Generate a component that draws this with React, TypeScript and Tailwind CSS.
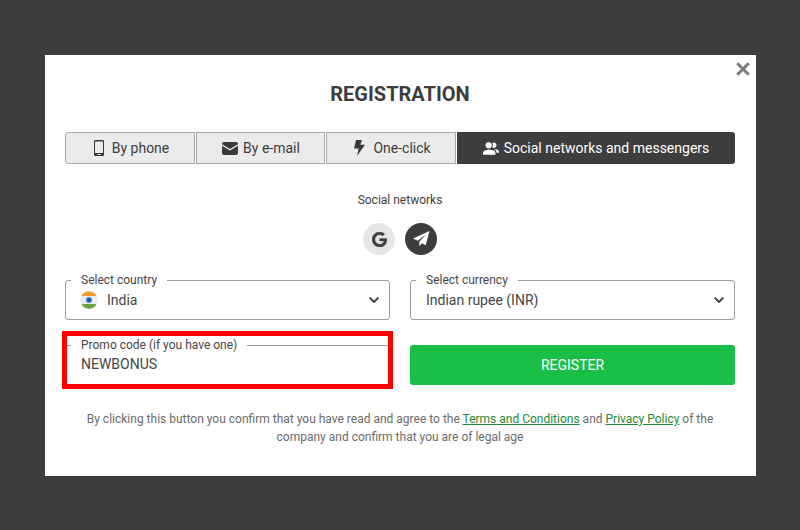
import type { ReactNode } from "react";

function PhoneIcon() {
  return (
    <svg width="10" height="16" viewBox="0 0 10 16" className="shrink-0">
      <path fillRule="evenodd" fill="#3a3a3a" d="M1.200 0h7.600Q10 0 10 1.200v13.600Q10 16 8.800 16H1.200Q0 16 0 14.800V1.200Q0 0 1.200 0zM1 1.500v11.500h8V1.500zM3.500 14v1h3v-1z" />
    </svg>
  );
}

function MailIcon() {
  return (
    <svg width="16" height="13" viewBox="0 0 16 13" className="shrink-0" fill="#3a3a3a">
      <path d="M2 0h12Q16 0 16 2v.3L8 7 0 2.300V2Q0 0 2 0z" />
      <path d="M0 3.700l8 4.700 8-4.700V11q0 2-2 2H2Q0 13 0 11z" />
    </svg>
  );
}

function BoltIcon() {
  return (
    <svg width="11" height="16" viewBox="0 0 11 16" className="shrink-0">
      <path fill="#3a3a3a" d="M2 0h6L6.300 4.700H11L3 16l1.600-7.400H0z" />
    </svg>
  );
}

function PeopleIcon() {
  return (
    <svg width="16" height="13" viewBox="0 0 16 13" className="shrink-0" fill="#fff">
      <circle cx="5.700" cy="3.300" r="3.100" />
      <path d="M0 12.800v-1.800C0 8.900 2.900 7.800 6.200 7.800s6.300 1.100 6.300 3.200v1.800z" />
      <path d="M9.300.900a2.700 2.700 0 1 1 0 4.600c.6-1.300.6-3.300 0-4.600z" />
      <path d="M11 7c2.800 0 5 .9 5 2.500v1.200h-2.400C13.300 9 12.500 7.900 11 7z" />
    </svg>
  );
}

function GoogleIcon() {
  return (
    <svg width="15" height="15" viewBox="0 0 24 24">
      <path fill="#3d3d3d" stroke="#3d3d3d" strokeWidth=".5" d="M12.240 10.285V14.400h6.806c-.275 1.765-2.056 5.174-6.806 5.174-4.095 0-7.439-3.389-7.439-7.574s3.345-7.574 7.439-7.574c2.330 0 3.891.989 4.785 1.849l3.254-3.138C18.189 1.186 15.479 0 12.240 0c-6.635 0-12 5.365-12 12s5.365 12 12 12c6.926 0 11.520-4.869 11.520-11.726 0-.788-.085-1.390-.189-1.989H12.240z" />
    </svg>
  );
}

function PlaneIcon() {
  return (
    <svg width="17" height="16" viewBox="0 0 17 16">
      <path fill="#fff" d="M16.500 0L0 7.500l4.600 2.300L13 3.400l-6.700 7.400v4.400l2.600-3 3.800 2z" />
    </svg>
  );
}

function IndiaFlag() {
  return (
    <svg width="18" height="18" viewBox="0 0 18 18" className="-ml-px mr-[9px] shrink-0">
      <clipPath id="flag">
        <circle cx="9" cy="9" r="8.700" />
      </clipPath>
      <g clipPath="url(#flag)">
        <path fill="#ebebeb" d="M0 0h18v18H0z" />
        <path fill="#f79a2b" d="M0 0h18v5H0z" />
        <path fill="#6ba646" d="M0 13h18v5H0z" />
      </g>
      <circle cx="9" cy="9" r="2.700" fill="#2b62b5" stroke="#5f90d2" />
      <circle cx="9" cy="9" r="1" fill="#153f8c" />
    </svg>
  );
}

function Chevron() {
  return (
    <svg width="10" height="6" viewBox="0 0 10 6" className="ml-auto mr-[10px]">
      <path d="M.6.600L5 5 9.400.600" fill="none" stroke="#3a3a3a" strokeWidth="1.800" />
    </svg>
  );
}

function Field({ label, children }: { label: string; children: ReactNode }) {
  return (
    <fieldset className="h-[46px] w-[325px] rounded-[3px] border border-[#9c9c9c] pl-[5px]">
      <legend className="h-[13px] px-[10px] text-xs leading-[13px] text-[#464646]">{label}</legend>
      <div className="flex h-[26px] items-center pl-[10px] text-sm text-[#464646]">{children}</div>
    </fieldset>
  );
}

const tab = "flex items-center justify-center border border-[#a8a8a8] bg-[#ebebeb]";

export default function App() {
  return (
    <div className="h-[530px] w-[800px] bg-[#3d3d3d] pl-[45px] pt-[55px] font-['Roboto',sans-serif]">
      <main className="relative flex h-[421px] w-[711px] flex-col bg-white pl-5 pr-[21px] pt-[27px]">
        <button aria-label="Close" className="absolute right-[6px] top-[7px]">
          <svg width="14" height="14" viewBox="0 0 14 14">
            <path d="M1.200 1.200l11.600 11.600M12.800 1.200L1.200 12.800" stroke="#7d7d7d" strokeWidth="3" />
          </svg>
        </button>
        <h1 className="text-center text-xl font-bold leading-6 text-[#3d3d3d]">REGISTRATION</h1>

        <nav className="mt-[26px] flex h-8 gap-px text-sm text-[#3d3d3d]">
          <button className={`${tab} w-[130px] gap-2 rounded-l-[3px] pl-[3px]`}><PhoneIcon />By phone</button>
          <button className={`${tab} w-[129px] gap-[5px] pl-px`}><MailIcon />By e-mail</button>
          <button className={`${tab} w-[130px] gap-2 pl-[3px]`}><BoltIcon />One-click</button>
          <button className="flex w-[278px] items-center justify-center gap-[5px] rounded-r-[3px] bg-[#3d3d3d] text-white"><PeopleIcon />Social networks and messengers</button>
        </nav>

        <p className="mt-7 text-center text-xs leading-4 text-[#3d3d3d]">Social networks</p>
        <div className="mt-[15px] flex justify-center gap-[10px]">
          <button aria-label="Google" className="flex size-8 items-center justify-center rounded-full bg-[#e6e6e6]"><GoogleIcon /></button>
          <button aria-label="Telegram" className="flex size-8 items-center justify-center rounded-full bg-[#3d3d3d]"><PlaneIcon /></button>
        </div>

        <form className="mt-[19px] grid grid-cols-2 items-end gap-x-5 gap-y-[19px]">
          <Field label="Select country"><IndiaFlag />India<Chevron /></Field>
          <Field label="Select currency">Indian rupee (INR)<Chevron /></Field>
          <div className="relative">
            <Field label="Promo code (if you have one)"><span className="pb-0.5">NEWBONUS</span></Field>
            <div className="absolute -left-[3px] -top-2 h-[58px] w-[331px] border-[5px] border-[#ff0000]" />
          </div>
          <button type="button" className="h-10 rounded-[3px] bg-[#1abf48] text-sm text-white">REGISTER</button>
        </form>

        <p className="mt-[25px] text-center text-xs leading-[18px] text-[#6b6b6b]">
          By clicking this button you confirm that you have read and agree to the{" "}
          <a className="text-[#1b8a38] underline">Terms and Conditions</a> and{" "}
          <a className="text-[#1b8a38] underline">Privacy Policy</a> of the<br />
          company and confirm that you are of legal age
        </p>
      </main>
    </div>
  );
}
